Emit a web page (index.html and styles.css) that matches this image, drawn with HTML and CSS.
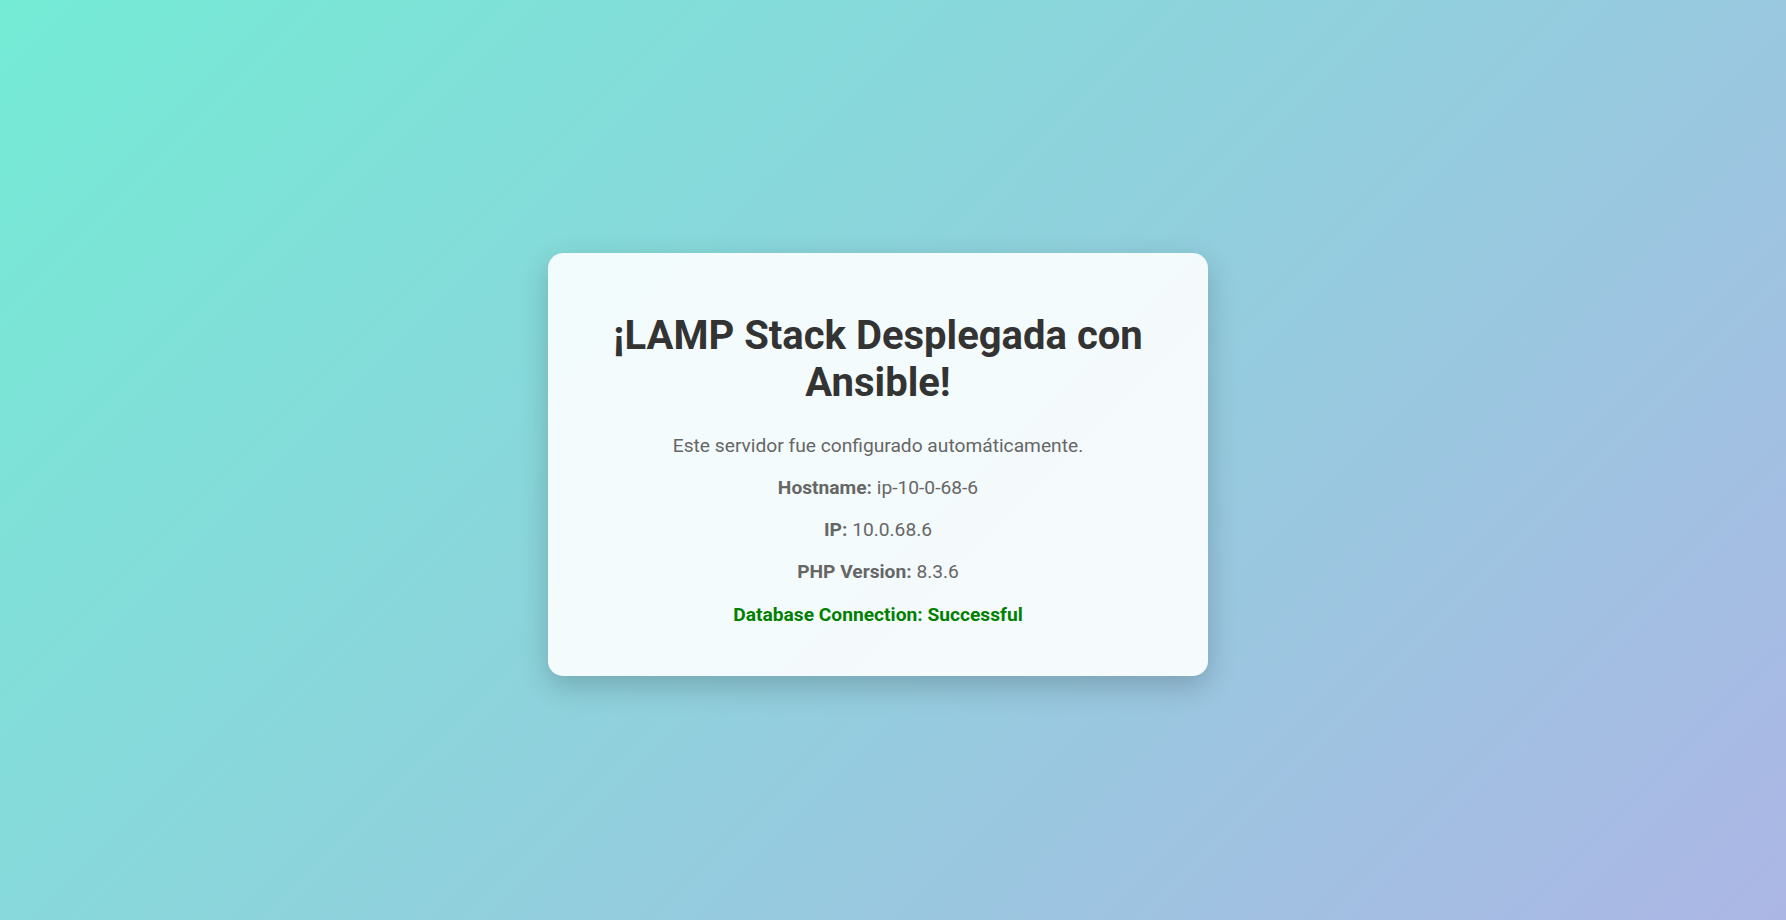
FILE: index.html
```html
<!DOCTYPE html>
<html lang="es">
<head>
<meta charset="utf-8">
<title>LAMP Stack</title>
<link rel="stylesheet" href="styles.css">
</head>
<body>
<main class="card">
  <h1 class="title">¡LAMP Stack Desplegada con Ansible!</h1>
  <p class="line">Este servidor fue configurado automáticamente.</p>
  <p class="line"><strong>Hostname:</strong> ip-10-0-68-6</p>
  <p class="line"><strong>IP:</strong> 10.0.68.6</p>
  <p class="line"><strong>PHP Version:</strong> 8.3.6</p>
  <p class="line ok"><strong>Database Connection: Successful</strong></p>
</main>
</body>
</html>
```
FILE: styles.css
```css
html, body {
  margin: 0;
  padding: 0;
}
body {
  min-height: 100vh;
  box-sizing: border-box;
  display: flex;
  align-items: center;
  justify-content: center;
  padding: 9px 30px 0 0;
  background: linear-gradient(135deg, #74ebd5 0%, #acb6e5 100%);
  font-family: Roboto, "Liberation Sans", Arial, sans-serif;
}
.card {
  width: 660px;
  box-sizing: border-box;
  padding: 32px 40px 31px;
  background: rgba(255, 255, 255, 0.9);
  border-radius: 15px;
  box-shadow: 0 10px 30px rgba(0, 0, 0, 0.2);
  text-align: center;
}
.title {
  margin: 26.8px 0 27.8px;
  font-size: 40px;
  line-height: normal;
  font-weight: 700;
  color: #333;
}
.line {
  margin: 19.2px 0;
  font-size: 19.2px;
  line-height: normal;
  color: #666;
}
.line strong {
  font-weight: 700;
}
.ok {
  color: #008000;
}
```
